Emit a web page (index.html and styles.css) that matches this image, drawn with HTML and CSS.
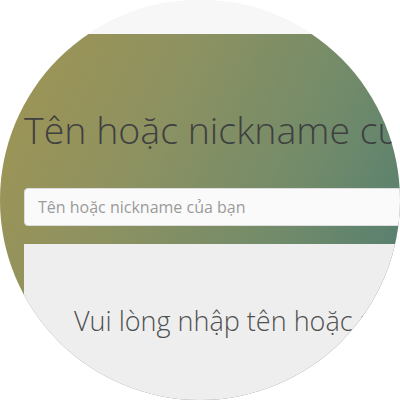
FILE: index.html
```html
<!DOCTYPE html>
<html lang="vi">
<head>
<meta charset="utf-8">
<link rel="stylesheet" href="styles.css">
</head>
<body>
<div class="lens">
  <div class="topbar"></div>
  <section class="hero">
    <h1 class="title">Tên hoặc nickname của bạn</h1>
    <div class="field">
      <input class="input" type="text" placeholder="Tên hoặc nickname của bạn">
    </div>
    <div class="panel">
      <p class="hint">Vui lòng nhập tên hoặc nickname của bạn</p>
    </div>
  </section>
</div>
</body>
</html>
```

FILE: styles.css
```css
html, body {
  margin: 0;
  padding: 0;
  background: #ffffff;
}
.lens {
  width: 400px;
  height: 400px;
  border-radius: 50%;
  overflow: hidden;
  background: #eeeeee;
  font-family: "Open Sans", "Noto Sans", sans-serif;
  display: flex;
  flex-direction: column;
}
.topbar {
  height: 34px;
  flex: none;
  background: #f7f7f7;
}
.hero {
  flex: 1;
  display: flex;
  flex-direction: column;
  padding-left: 24px;
  background: linear-gradient(115deg, #a09553 0%, #8f9260 32%, #728b6a 65%, #4a7a72 100%);
}
.title {
  margin: 0;
  padding-top: 72px;
  font-weight: 300;
  font-size: 37.5px;
  line-height: 48px;
  color: #3f4040;
  white-space: nowrap;
}
.field {
  margin-top: 34px;
}
.input {
  box-sizing: border-box;
  width: 420px;
  height: 38px;
  padding: 0 13px;
  border: 1px solid #dedede;
  border-radius: 4px;
  background: #fafafa;
  font-family: "Open Sans", "Noto Sans", sans-serif;
  font-size: 16px;
  color: #555;
  outline: none;
}
.input::placeholder {
  color: #9a9a9a;
}
.panel {
  flex: 1;
  margin-top: 18px;
  background: #eeeeee;
  padding-left: 50px;
}
.hint {
  margin: 0;
  padding-top: 57px;
  font-weight: 300;
  font-size: 27px;
  line-height: 40px;
  color: #505050;
  white-space: nowrap;
}
```
